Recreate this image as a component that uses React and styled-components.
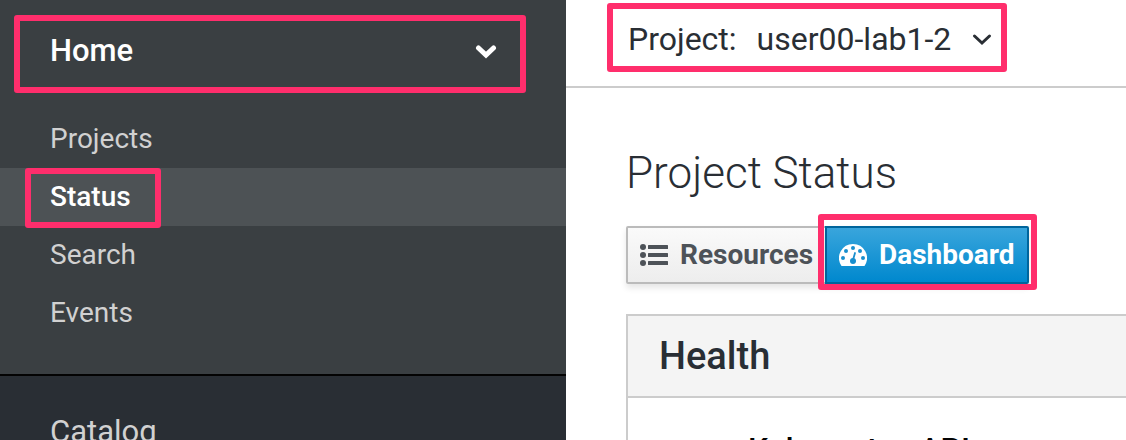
import React from "react";
import styled, { createGlobalStyle, css } from "styled-components";

const GlobalStyle = createGlobalStyle`
  *, *::before, *::after { box-sizing: border-box; }
  html, body { margin: 0; }
  body { background: #fff; }
  body, button { font-family: Roboto, "Liberation Sans", sans-serif; }
`;

const highlight = css`
  position: relative;
  &::after {
    content: "";
    position: absolute;
    inset: ${(p) => p.$inset};
    border: 6px solid #ff2e6c;
    border-radius: 3px;
    pointer-events: none;
    z-index: 2;
  }
`;

const Shell = styled.div`
  display: grid;
  grid-template-columns: 566px minmax(0, 1fr);
  height: 100vh;
  overflow: hidden;
`;

const Sidebar = styled.nav`
  background: #292e34;
  overflow: hidden;
`;

const Section = styled.section`
  background: ${(p) => (p.$open ? "#3a3f42" : "#292e34")};
  border-bottom: 2px solid #030303;
  padding: ${(p) => (p.$open ? "15px 0 32px" : "0")};
`;

const SectionToggle = styled.button`
  ${highlight}
  display: flex;
  align-items: center;
  justify-content: space-between;
  width: calc(100% - 54px);
  height: 78px;
  margin: 0 40px 0 14px;
  padding: 0 29px 6px 36px;
  border: 0;
  background: none;
  color: #fff;
  font-size: 31px;
  font-weight: 500;
  line-height: 40px;
`;

const ClosedToggle = styled.button`
  display: block;
  width: 100%;
  padding: 36px 50px;
  border: 0;
  background: none;
  color: #d1d1d1;
  font-size: 31px;
  line-height: 40px;
  text-align: left;
`;

const NavList = styled.ul`
  list-style: none;
  margin: 17px 0 0;
  padding: 0;
`;

const NavItem = styled.li`
  display: flex;
  align-items: center;
  height: 58px;
  padding-left: 50px;
  background: ${(p) => (p.$active ? "#4d5255" : "transparent")};
`;

const NavLink = styled.a`
  color: ${(p) => (p.$active ? "#fff" : "#d1d1d1")};
  font-size: 28px;
  font-weight: ${(p) => (p.$active ? 500 : 400)};
  line-height: 40px;
  text-decoration: none;
  ${(p) => p.$inset && highlight}
`;

const Main = styled.main`
  display: flex;
  flex-direction: column;
  min-width: 0;
  background: #fff;
  color: #292e34;
`;

const ProjectBar = styled.header`
  flex: none;
  display: flex;
  align-items: center;
  height: 88px;
  padding: 0 62px 8px;
  border-bottom: 2px solid #ccc;
`;

const ProjectButton = styled.button`
  ${highlight}
  display: flex;
  align-items: center;
  padding: 0;
  border: 0;
  background: none;
  color: #292e34;
  font-size: 32px;
  font-weight: 400;
  line-height: 40px;
  white-space: nowrap;
`;

const ProjectName = styled.span`
  margin: 0 20px;
`;

const Content = styled.div`
  flex: none;
  padding: 56px 0 0 60px;
`;

const Title = styled.h1`
  margin: 0 0 24px;
  font-size: 44px;
  font-weight: 300;
  line-height: 58px;
`;

const ButtonGroup = styled.div`
  display: flex;
  margin-bottom: 30px;
`;

const ViewButton = styled.button`
  display: flex;
  align-items: center;
  gap: 12px;
  height: 58px;
  padding: 0 12px;
  border: 2px solid ${(p) => (p.$primary ? "#00659c" : "#bbb")};
  border-radius: ${(p) => (p.$primary ? "0 2px 2px 0" : "2px 0 0 2px")};
  background: ${(p) =>
    p.$primary
      ? "linear-gradient(#39a5dc, #0088ce)"
      : "linear-gradient(#fafafa, #ededed)"};
  box-shadow: 0 4px 6px rgba(3, 3, 3, 0.1);
  color: ${(p) => (p.$primary ? "#fff" : "#4d5258")};
  font-size: 28px;
  font-weight: 700;
  line-height: 40px;
  & + & {
    margin-left: -2px;
  }
  ${(p) => p.$inset && highlight}
`;

const Panel = styled.section`
  border: 2px solid #ccc;
  border-right: 0;
`;

const PanelTitle = styled.h2`
  margin: 0;
  padding: 16px 31px;
  border-bottom: 2px solid #ccc;
  background: #f4f4f4;
  font-size: 38px;
  font-weight: 500;
  line-height: 48px;
`;

const PanelBody = styled.div`
  padding: 31px 120px;
  color: #030303;
  font-size: 32px;
  font-weight: 500;
  line-height: 40px;
`;

const Chevron = ({ stroke }) => (
  <svg width="22" height="16" viewBox="0 0 22 16" fill="none" aria-hidden="true">
    <path d="M3.5 5 L11 12 L18.5 5" stroke="currentColor" strokeWidth={stroke} strokeLinecap="round" />
  </svg>
);

const ListIcon = () => (
  <svg width="28" height="22" viewBox="0 0 28 22" fill="currentColor" aria-hidden="true">
    <circle cx="3" cy="3" r="3" />
    <circle cx="3" cy="11" r="3" />
    <circle cx="3" cy="19" r="3" />
    <rect x="8" y="1" width="20" height="4" rx="0.5" />
    <rect x="8" y="9" width="20" height="4" rx="0.5" />
    <rect x="8" y="17" width="20" height="4" rx="0.5" />
  </svg>
);

const GaugeIcon = () => (
  <svg width="28" height="22" viewBox="0 0 28 22" aria-hidden="true">
    <path d="M14 0a14 14 0 0 0-11.8 21.5q.3.5 1 .5h21.6q.7 0 1-.5A14 14 0 0 0 14 0z" fill="#fff" />
    <g fill="#198fce">
      <circle cx="4" cy="14" r="2" />
      <circle cx="7" cy="7" r="2" />
      <circle cx="14" cy="4" r="2" />
      <circle cx="21" cy="7" r="2" />
      <circle cx="24" cy="14" r="2" />
      <circle cx="14" cy="17" r="3" />
    </g>
    <path d="M14 16 L16 9" stroke="#198fce" strokeWidth="1.8" strokeLinecap="round" />
  </svg>
);

const links = [
  { label: "Projects" },
  { label: "Status", active: true, inset: "-9px -30px -11px -25px" },
  { label: "Search" },
  { label: "Events" },
];

export default function App() {
  return (
    <>
      <GlobalStyle />
      <Shell>
        <Sidebar>
          <Section $open>
            <SectionToggle $inset="0" aria-expanded="true">
              Home <Chevron stroke={5} />
            </SectionToggle>
            <NavList>
              {links.map((l) => (
                <NavItem key={l.label} $active={l.active}>
                  <NavLink href="#" $active={l.active} $inset={l.inset}>
                    {l.label}
                  </NavLink>
                </NavItem>
              ))}
            </NavList>
          </Section>
          <Section>
            <ClosedToggle aria-expanded="false">Catalog</ClosedToggle>
          </Section>
        </Sidebar>
        <Main>
          <ProjectBar>
            <ProjectButton $inset="-16px -14px -13px -21px" aria-haspopup="listbox">
              Project:
              <ProjectName>user00-lab1-2</ProjectName>
              <Chevron stroke={3} />
            </ProjectButton>
          </ProjectBar>
          <Content>
            <Title>Project Status</Title>
            <ButtonGroup>
              <ViewButton>
                <ListIcon />
                Resources
              </ViewButton>
              <ViewButton $primary $inset="-14px -10px -8px -9px">
                <GaugeIcon />
                Dashboard
              </ViewButton>
            </ButtonGroup>
            <Panel>
              <PanelTitle>Health</PanelTitle>
              <PanelBody>Kubernetes API</PanelBody>
            </Panel>
          </Content>
        </Main>
      </Shell>
    </>
  );
}
